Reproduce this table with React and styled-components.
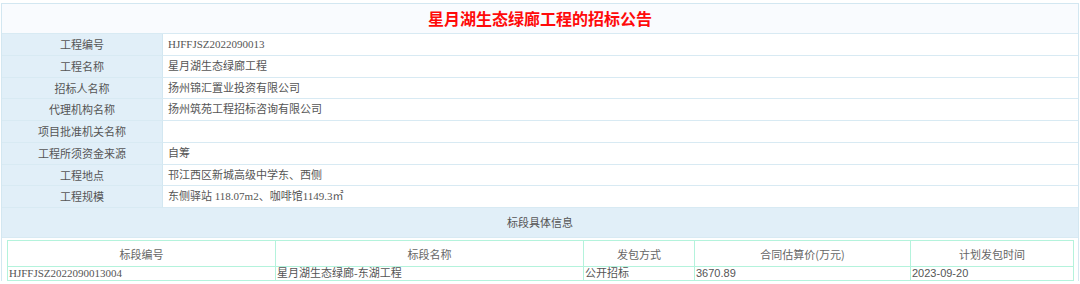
import React from "react";
import styled, { createGlobalStyle } from "styled-components";

const Global = createGlobalStyle`
  html, body { margin: 0; padding: 0; background: #ffffff; }
`;

const Frame = styled.div`
  margin: 3px 0 0 1px;
  width: 1078px;
  box-sizing: border-box;
  border: 1px solid #d3e7f1;
  border-bottom: none;
  font-family: "Liberation Serif", "Noto Sans CJK SC", serif;
  font-size: 11px;
  color: #555555;
`;

const Title = styled.div`
  height: 29px;
  line-height: 29px;
  background: #f9fbfe;
  border-bottom: 1px solid #d8eaf3;
  text-align: center;
  color: #ff0a0a;
  font-family: "Noto Sans CJK SC", sans-serif;
  font-weight: 700;
  font-size: 16px;
`;

const InfoGrid = styled.div`
  display: grid;
  grid-template-columns: 161px 1fr;
`;

const Cell = styled.div`
  height: 20.75px;
  line-height: 20.75px;
  border-bottom: 1px solid #d8eaf3;
  white-space: nowrap;
  ${(p) =>
    p.$label
      ? `
    background: #e1eff8;
    text-align: center;
    border-right: 1px solid #d3e7f1;
    font-family: "Noto Sans CJK SC", sans-serif;
  `
      : `
    background: #ffffff;
    padding-left: 5px;
  `}
`;

const Section = styled.div`
  height: 29px;
  line-height: 29px;
  background: #e1eff8;
  text-align: center;
  font-family: "Noto Sans CJK SC", sans-serif;
  border-bottom: 1px solid #d8eaf3;
`;

const InnerWrap = styled.div`
  padding: 2px 4px 0 5px;
`;

const Lots = styled.table`
  border-collapse: collapse;
  table-layout: fixed;
  width: 1066px;
  font-size: 11px;
  color: #555555;
`;

const Th = styled.th`
  border: 1px solid #b4f3dc;
  height: 25px;
  padding: 0;
  font-weight: 400;
  text-align: center;
  color: #666666;
  font-family: "Noto Sans CJK SC", sans-serif;
`;

const Td = styled.td`
  border: 1px solid #b4f3dc;
  height: 13px;
  line-height: 13px;
  padding: 0 0 0 1px;
  text-align: left;
  white-space: nowrap;
  font-family: ${(p) =>
    p.$sans
      ? `"Liberation Sans", "Noto Sans CJK SC", sans-serif`
      : `"Liberation Serif", "Noto Sans CJK SC", serif`};
`;

const rows = [
  ["工程编号", "HJFFJSZ2022090013"],
  ["工程名称", "星月湖生态绿廊工程"],
  ["招标人名称", "扬州锦汇置业投资有限公司"],
  ["代理机构名称", "扬州筑苑工程招标咨询有限公司"],
  ["项目批准机关名称", ""],
  ["工程所须资金来源", "自筹"],
  ["工程地点", "邗江西区新城高级中学东、西侧"],
  ["工程规模", "东侧驿站 118.07m2、咖啡馆1149.3㎡"],
];

const cols = [268, 308, 111, 216, 163];

export default function App() {
  return (
    <>
      <Global />
      <Frame>
        <Title>星月湖生态绿廊工程的招标公告</Title>
        <InfoGrid>
          {rows.map(([k, v]) => (
            <React.Fragment key={k}>
              <Cell $label>{k}</Cell>
              <Cell>{v}</Cell>
            </React.Fragment>
          ))}
        </InfoGrid>
        <Section>标段具体信息</Section>
        <InnerWrap>
          <Lots>
            <colgroup>
              {cols.map((w, i) => (
                <col key={i} style={{ width: w }} />
              ))}
            </colgroup>
            <thead>
              <tr>
                <Th>标段编号</Th>
                <Th>标段名称</Th>
                <Th>发包方式</Th>
                <Th>合同估算价(万元)</Th>
                <Th>计划发包时间</Th>
              </tr>
            </thead>
            <tbody>
              <tr>
                <Td>HJFFJSZ2022090013004</Td>
                <Td>星月湖生态绿廊-东湖工程</Td>
                <Td>公开招标</Td>
                <Td $sans>3670.89</Td>
                <Td $sans>2023-09-20</Td>
              </tr>
            </tbody>
          </Lots>
        </InnerWrap>
      </Frame>
    </>
  );
}
